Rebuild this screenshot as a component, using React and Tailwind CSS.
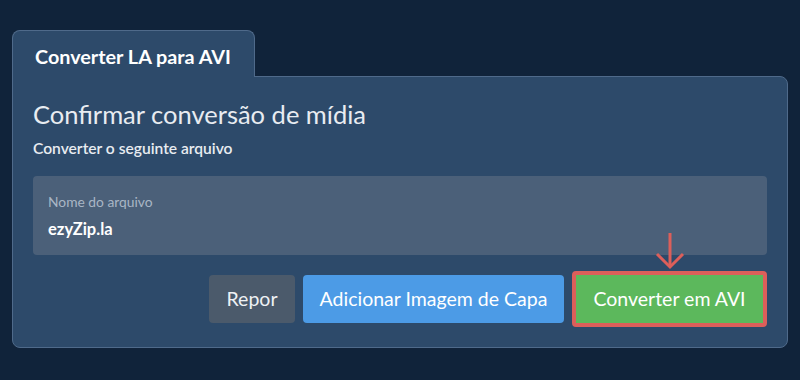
const font = { fontFamily: 'Lato, "Noto Sans", sans-serif' };

const DownArrow = () => (
  <svg
    width="32"
    height="38"
    viewBox="0 0 32 38"
    className="absolute left-1/2 -translate-x-1/2 -top-[39px]"
    fill="none"
    stroke="#dc5f5a"
    strokeWidth="3"
  >
    <path d="M16 1 V34" />
    <path d="M3 22 L16 35 L29 22" />
  </svg>
);

const App = () => {
  return (
    <div className="w-[800px] h-[380px] bg-[#10233a] pt-[30px] px-[12px]" style={font}>
      <div className="flex">
        <div className="relative z-10 -mb-px h-[47px] w-[243px] rounded-t-[8px] border border-b-0 border-[#4f6a8a] bg-[#2d4a6a] pl-[22px] pt-[11px] text-[19.8px] font-bold text-white">
          Converter LA para AVI
        </div>
      </div>
      <div className="w-[776px] rounded-b-[8px] rounded-tr-[8px] border border-[#4f6a8a] bg-[#2d4a6a] px-[20px] pb-[20px] pt-[20px]">
        <h2 className="text-[25.5px] leading-[34px] text-[#e8ecf1]">Confirmar conversão de mídia</h2>
        <p className="mt-[7px] text-[15.6px] font-semibold leading-[20px] text-[#e8ecf1]">
          Converter o seguinte arquivo
        </p>
        <div className="mt-[18px] h-[79px] rounded-[4px] bg-[#4b6079] px-[15px] pt-[17px]">
          <div className="text-[13.8px] leading-[18px] text-[#a9b6c5]">Nome do arquivo</div>
          <div className="mt-[8px] text-[16.5px] font-bold leading-[20px] text-white">ezyZip.la</div>
        </div>
        <div className="mt-[16px] flex items-center justify-end gap-[8px]">
          <button className="h-[48px] w-[86px] rounded-[4px] bg-[#4b5a6b] text-[19.5px] text-[#eef1f4]">
            Repor
          </button>
          <button className="h-[48px] w-[261px] rounded-[4px] bg-[#4c9be6] text-[19.5px] text-white">
            Adicionar Imagem de Capa
          </button>
          <div className="relative">
            <DownArrow />
            <button className="h-[56px] w-[195px] rounded-[4px] border-[4px] border-[#dc5f5a] bg-[#5cb85c] text-[19.5px] text-white">
              Converter em AVI
            </button>
          </div>
        </div>
      </div>
    </div>
  );
};

export default App;
